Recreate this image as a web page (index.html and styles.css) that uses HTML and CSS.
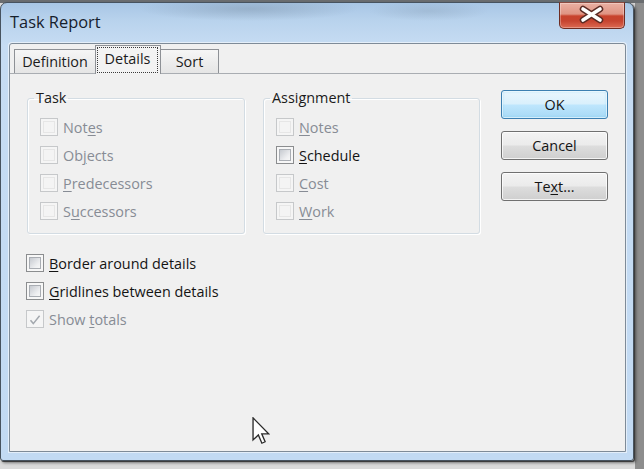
FILE: index.html
```html
<!DOCTYPE html>
<html>
<head>
<meta charset="utf-8">
<title>Task Report</title>
<link rel="stylesheet" href="styles.css">
</head>
<body>
<div class="window">
  <div class="titlebar">
    <span class="title">Task Report</span>
    <div class="close">
      <svg width="66" height="27" viewBox="0 0 66 27">
        <path d="M24 7 L41 18 M41 7 L24 18" stroke="#5a2b24" stroke-width="6.5" stroke-linecap="round" fill="none"/>
        <path d="M24 7 L41 18 M41 7 L24 18" stroke="#ffffff" stroke-width="3.6" stroke-linecap="round" fill="none"/>
      </svg>
    </div>
  </div>
  <div class="client">
    <div class="tabs">
      <div class="tab first">Definition</div>
      <div class="tab active"><span class="focus">Details</span></div>
      <div class="tab last">Sort</div>
    </div>
    <div class="panel">
      <div class="options">
        <div class="groups">
          <fieldset class="group task">
            <legend>Task</legend>
            <label class="check disabled"><span class="cb"><span></span></span><span>Not<u>e</u>s</span></label>
            <label class="check disabled"><span class="cb"><span></span></span><span>Ob<u>j</u>ects</span></label>
            <label class="check disabled"><span class="cb"><span></span></span><span><u>P</u>redecessors</span></label>
            <label class="check disabled"><span class="cb"><span></span></span><span>S<u>u</u>ccessors</span></label>
          </fieldset>
          <fieldset class="group assign">
            <legend>Assignment</legend>
            <label class="check disabled"><span class="cb"><span></span></span><span><u>N</u>otes</span></label>
            <label class="check"><span class="cb"><span></span></span><span><u>S</u>chedule</span></label>
            <label class="check disabled"><span class="cb"><span></span></span><span><u>C</u>ost</span></label>
            <label class="check disabled"><span class="cb"><span></span></span><span><u>W</u>ork</span></label>
          </fieldset>
        </div>
        <div class="extras">
          <label class="check"><span class="cb"><span></span></span><span><u>B</u>order around details</span></label>
          <label class="check"><span class="cb"><span></span></span><span><u>G</u>ridlines between details</span></label>
          <label class="check disabled"><span class="cb checked"><span><svg width="12" height="12" viewBox="0 0 12 12"><path d="M1.5 6.2 L4.3 9.6 L10.6 1.8" stroke="#a3a8ae" stroke-width="1.5" fill="none"/></svg></span></span><span>Show <u>t</u>otals</span></label>
        </div>
      </div>
      <div class="buttons">
        <div class="btn default">OK</div>
        <div class="btn">Cancel</div>
        <div class="btn">Te<u>x</u>t...</div>
      </div>
    </div>
  </div>
</div>
<svg class="cursor" width="18" height="28" viewBox="0 0 12 19">
  <path d="M0.6 0.6 L0.6 15.6 L4.2 12.2 L6.6 17.8 L8.8 16.8 L6.5 11.4 L11.2 11.4 Z" fill="#ffffff" stroke="#2a2a2a" stroke-width="0.9" stroke-linejoin="miter"/>
</svg>
</body>
</html>
```
FILE: styles.css
```css
* { box-sizing: border-box; }
html, body { margin: 0; padding: 0; }
body {
  width: 644px;
  height: 469px;
  overflow: hidden;
  position: relative;
  font-family: "Open Sans", "Noto Sans", sans-serif;
  font-size: 14.4px;
  color: #1b1b1b;
  background:
    linear-gradient(#6a6d70 0, #6a6d70 3px, transparent 3px),
    linear-gradient(to right, transparent 635px, #8d8d8d 635px),
    #dadada;
}
u { text-decoration: underline; text-underline-offset: 2px; text-decoration-thickness: 1px; }

.window {
  width: 634px;
  height: 459px;
  margin-top: 2px;
  border: 1px solid #47535f;
  border-radius: 7px 7px 3px 3px;
  background: linear-gradient(180deg, #a8c6e5 0px, #b9d3ed 18px, #c6dcf3 42px, #c2daf3 100%);
  padding: 0 7px 8px 8px;
  display: flex;
  flex-direction: column;
  box-shadow: 1px 1px 0 #3d3d3d, 2px 2px 3px rgba(0,0,0,0.45);
}

.titlebar {
  height: 40px;
  display: flex;
  align-items: flex-start;
  background:
    radial-gradient(ellipse 110px 12px at 240px 6px, rgba(110,130,150,0.35), transparent),
    radial-gradient(ellipse 60px 10px at 420px 8px, rgba(120,140,160,0.25), transparent);
}
.title {
  margin: 8px 0 0 1px;
  font-size: 16.4px;
  line-height: 22px;
  color: #16202c;
}
.close {
  margin: -1px 1px 0 auto;
  width: 66px;
  height: 27px;
  border: 1px solid #6e2c22;
  border-top-color: #8a4a40;
  border-radius: 0 0 5px 5px;
  background: linear-gradient(180deg, #eab0a3 0%, #df9483 44%, #c8432d 52%, #c64430 72%, #dc6a52 100%);
  box-shadow: inset 0 0 0 1px rgba(255,255,255,0.3);
}
.close svg { display: block; margin: -1px 0 0 -1px; }

.client {
  flex: 1;
  border: 1px solid #7e8b98;
  border-radius: 3px 3px 0 0;
  background: #f0f0f0;
  display: flex;
  flex-direction: column;
  box-shadow: 0 0 0 1px rgba(255,255,255,0.55);
}

.tabs {
  display: flex;
  align-items: flex-end;
  height: 30px;
  padding: 1px 0 0 4px;
  border-bottom: 1px solid #a9adb2;
}
.tab {
  height: 24px;
  line-height: 23px;
  border: 1px solid #8e9196;
  border-bottom: 0;
  background: linear-gradient(#f6f6f6, #e5e5e5);
  text-align: center;
  color: #1b1b1b;
}
.tab.first { width: 81px; border-right: 0; }
.tab.active {
  width: 66px;
  height: 29px;
  margin-bottom: -1px;
  background: #f3f3f3;
  padding: 1px 2px 0 1px;
}
.tab.last { width: 58px; border-left: 0; }
.focus {
  display: block;
  height: 26px;
  line-height: 22px;
  border: 1px dotted #3a3a3a;
}

.panel {
  flex: 1;
  display: flex;
  align-items: flex-start;
  padding: 14px 0 0 17px;
}
.options { width: 453px; }
.groups { display: flex; gap: 18px; }
.group {
  margin: 0;
  padding: 0 0 8px 6px;
  border: 1px solid #d3dce3;
  border-radius: 3px;
  box-shadow: inset 1px 1px 0 #ffffff, 1px 1px 0 #ffffff;
  min-width: 0;
}
.group.task { width: 218px; }
.group.assign { width: 217px; }
.group legend {
  padding: 0 2px;
  line-height: 20px;
  color: #1b1b1b;
}
.group .check { margin-left: 6px; }
.group .check:first-of-type { margin-top: 5px; }

.check {
  display: flex;
  align-items: center;
  gap: 5px;
  height: 28px;
  color: #141414;
}
.check.disabled { color: #878c95; }

.cb {
  flex: none;
  width: 18px;
  height: 18px;
  border: 1px solid #8b8d8f;
  background: #f7f7f7;
  padding: 2px;
}
.cb > span {
  display: block;
  width: 100%;
  height: 100%;
  border: 1px solid #a9adb3;
  background: linear-gradient(135deg, #c6cad0, #eeeff1 70%, #f7f7f7);
}
.disabled .cb { border-color: #c6c8ca; background: #f5f5f5; }
.disabled .cb > span { border-color: #e6e6e6; background: #f4f4f4; }
.cb.checked > span { border-color: transparent; background: transparent; }
.cb.checked svg { display: block; margin: 0 0 0 -1px; }

.extras { margin: 15px 0 0 -1px; }

.buttons {
  margin: 2px 0 0 21px;
  display: flex;
  flex-direction: column;
  gap: 12px;
}
.btn {
  width: 107px;
  height: 29px;
  line-height: 27px;
  text-align: center;
  border: 1px solid #707070;
  border-radius: 3px;
  color: #141414;
  background: linear-gradient(180deg, #f3f3f3 0%, #ebebeb 48%, #dddddd 52%, #cfcfcf 100%);
  box-shadow: inset 0 0 0 1px rgba(255,255,255,0.75);
}
.btn.default {
  border-color: #3c7fb1;
  background: linear-gradient(180deg, #eaf6fd 0%, #d9f0fc 48%, #bee6fd 52%, #a7d9f5 100%);
  box-shadow: inset 0 0 0 1px rgba(255,255,255,0.6), inset 0 0 3px rgba(80,190,240,0.6);
}

.cursor {
  position: absolute;
  left: 252px;
  top: 417px;
}
```
